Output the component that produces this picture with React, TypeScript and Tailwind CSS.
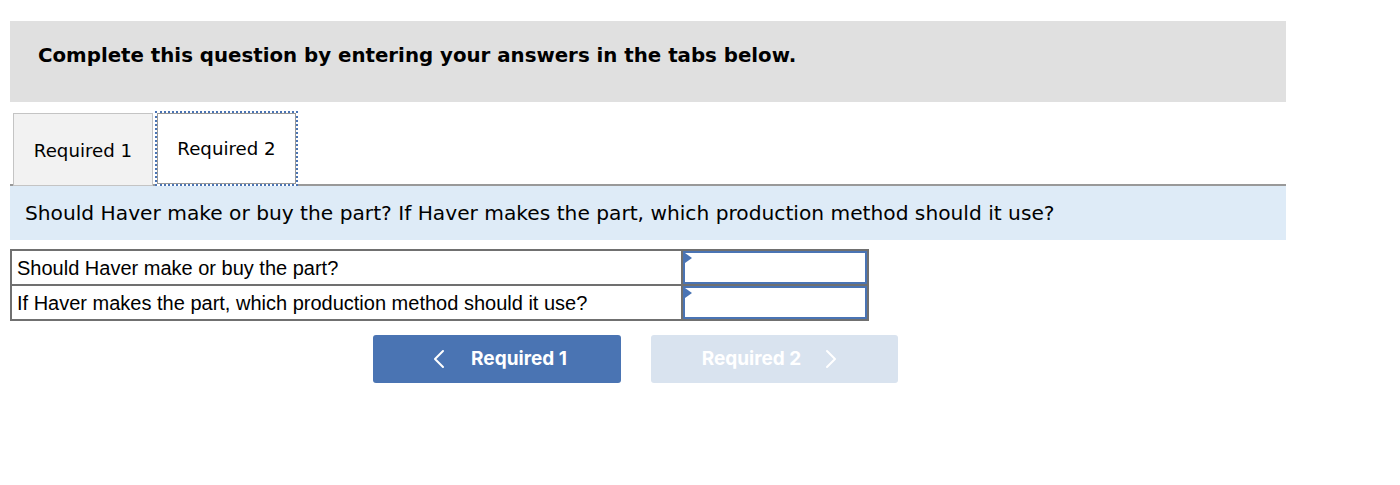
import { ChevronLeft, ChevronRight } from "lucide-react";

const rows = [
  "Should Haver make or buy the part?",
  "If Haver makes the part, which production method should it use?",
];

function AnswerCell() {
  return (
    <td className="relative h-[35px] w-[186px] border-2 border-[#707070] p-0">
      <div className="relative h-full w-full border-2 border-[#4a74b4] bg-white">
        <span className="absolute left-0 top-0 h-0 w-0 border-y-[5px] border-l-[7px] border-y-transparent border-l-[#4a74b4]" />
      </div>
    </td>
  );
}

export default function App() {
  return (
    <div className="min-h-[485px] bg-white pl-[10px] pt-[21px]">
      <div className="w-[1276px]">
        <div className="flex h-[81px] items-start bg-[#e0e0e0] pl-[28px] pt-[20px]">
          <h2 className="font-['DejaVu_Sans',Verdana,sans-serif] text-[19.8px] font-bold text-black">
            Complete this question by entering your answers in the tabs below.
          </h2>
        </div>

        <div className="mt-[9px] flex items-end border-b-2 border-[#999999] pl-[3px]">
          <button
            type="button"
            className="mb-[-2px] flex h-[73px] w-[140px] items-center justify-center border border-[#c4c4c4] bg-[#f2f2f2] pt-[2px] font-['DejaVu_Sans',Verdana,sans-serif] text-[18.2px] text-black"
          >
            Required 1
          </button>
          <button
            type="button"
            className="mb-[-2px] ml-[2px] flex h-[75px] w-[143px] items-center justify-center border-2 border-dotted border-[#4a74b4] bg-white font-['DejaVu_Sans',Verdana,sans-serif] text-[18.2px] text-black outline outline-1 -outline-offset-[3px] outline-[#999999]"
          >
            Required 2
          </button>
        </div>

        <div className="flex h-[54px] items-center bg-[#deebf7] pl-[15px]">
          <p className="font-['DejaVu_Sans',Verdana,sans-serif] text-[20.2px] text-black">
            Should Haver make or buy the part? If Haver makes the part, which production method should it use?
          </p>
        </div>

        <table className="mt-[9px] w-[859px] border-collapse border-2 border-[#707070] font-['Liberation_Sans',Arial,sans-serif] text-[20px] text-black">
          <tbody>
            {rows.map((row) => (
              <tr key={row}>
                <td className="h-[35px] border-2 border-[#707070] px-[5px] py-0 align-middle leading-none">{row}</td>
                <AnswerCell />
              </tr>
            ))}
          </tbody>
        </table>

        <div className="mt-[14px] flex gap-[30px] pl-[363px]">
          <button
            type="button"
            className="flex h-[48px] w-[248px] items-center justify-center gap-[16px] rounded-[3px] bg-[#4a74b3] pr-[4px] font-['Inter',sans-serif] text-[19px] font-bold text-white"
          >
            <ChevronLeft className="size-[32px]" strokeWidth={1.5} />
            Required 1
          </button>
          <button
            type="button"
            disabled
            className="flex h-[48px] w-[247px] items-center justify-center gap-[14px] rounded-[3px] bg-[#d9e3ef] font-['Inter',sans-serif] text-[19px] font-bold text-white"
          >
            Required 2
            <ChevronRight className="size-[32px]" strokeWidth={1.5} />
          </button>
        </div>
      </div>
    </div>
  );
}
